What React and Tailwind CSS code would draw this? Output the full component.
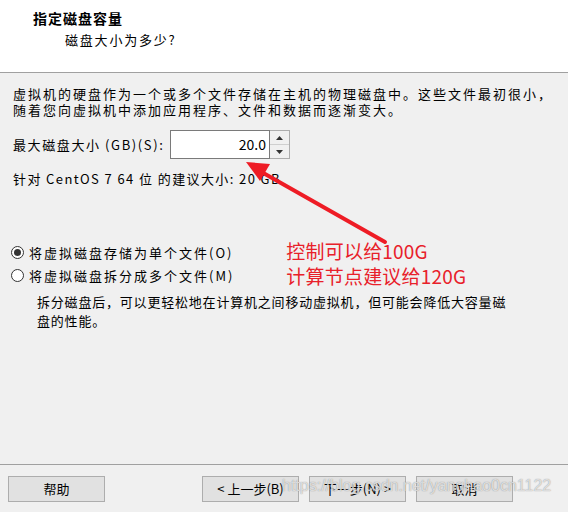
import React from "react";

const font = { fontFamily: '"Noto Sans CJK SC", "Noto Sans", sans-serif' };

function Radio({ checked, label }) {
  return (
    <label className="flex items-center h-[23px] text-[13px] tracking-[2px] text-black">
      <span className="w-[13px] h-[13px] rounded-full border border-[#333] bg-white flex items-center justify-center mr-[5px]">
        {checked && <span className="w-[7px] h-[7px] rounded-full bg-[#333]" />}
      </span>
      {label}
    </label>
  );
}

function Button({ children, className = "" }) {
  return (
    <button
      className={
        "h-[26px] w-[97px] border border-[#adadad] bg-[#e1e1e1] text-[13px] text-black flex items-center justify-center " +
        className
      }
    >
      {children}
    </button>
  );
}

export default function App() {
  return (
    <div className="relative w-[568px] h-[512px] bg-[#f0f0f0] flex flex-col overflow-hidden" style={font}>
      {/* header */}
      <div className="h-[73px] shrink-0 bg-white border-b border-[#a0a0a0] pt-[8px]">
        <div className="pl-[33px] text-[14px] font-bold tracking-[1px] leading-[20px] text-black">指定磁盘容量</div>
        <div className="pl-[65px] mt-[3px] text-[13px] tracking-[1.8px] leading-[18px] text-black">磁盘大小为多少?</div>
      </div>

      {/* body */}
      <div className="flex-1 px-[13px] pt-[13px] text-[13px] text-black">
        <p className="leading-[16px] tracking-[2px]">
          虚拟机的硬盘作为一个或多个文件存储在主机的物理磁盘中。这些文件最初很小，
          <br />
          随着您向虚拟机中添加应用程序、文件和数据而逐渐变大。
        </p>

        <div className="flex items-center mt-[12px] h-[29px]">
          <span className="tracking-[1.6px] w-[157px]">最大磁盘大小 (GB)(S):</span>
          <div className="flex h-[29px]">
            <div className="w-[100px] h-full border border-[#7a7a7a] bg-white flex items-center justify-end pr-[3px] text-[14px]">
              20.0
            </div>
            <div className="w-[20px] h-full flex flex-col border border-l-0 border-[#adadad]">
              <div className="flex-1 bg-[#f0f0f0] border-b border-[#cfcfcf] flex items-center justify-center">
                <svg width="7" height="4" viewBox="0 0 7 4"><path d="M3.5 0 L7 4 L0 4 Z" fill="#333" /></svg>
              </div>
              <div className="flex-1 bg-[#f0f0f0] flex items-center justify-center">
                <svg width="7" height="4" viewBox="0 0 7 4"><path d="M0 0 L7 0 L3.5 4 Z" fill="#333" /></svg>
              </div>
            </div>
          </div>
        </div>

        <p className="mt-[11px] leading-[18px] tracking-[1.4px]">针对 CentOS 7 64 位 的建议大小: 20 GB</p>

        <div className="mt-[53px] flex items-start">
          <div className="flex flex-col -ml-[2px]">
            <Radio checked label="将虚拟磁盘存储为单个文件(O)" />
            <Radio label="将虚拟磁盘拆分成多个文件(M)" />
          </div>
          <div className="ml-[52px] -mt-[3px] text-[19px] leading-[25px] text-[#e8202a] tracking-[0.2px]">
            <div>控制可以给100G</div>
            <div>计算节点建议给120G</div>
          </div>
        </div>

        <p className="ml-[24px] mt-[4px] leading-[19px] tracking-[0.8px] w-[480px]">
          拆分磁盘后，可以更轻松地在计算机之间移动虚拟机，但可能会降低大容量磁盘的性能。
        </p>
      </div>

      {/* footer */}
      <div className="h-[48px] shrink-0 border-t border-[#a0a0a0] flex items-start pt-[11px] pl-[8px] pr-[55px]">
        <Button>帮助</Button>
        <div className="flex-1" />
        <Button>&lt; 上一步(B)</Button>
        <Button className="ml-[10px]">下一步(N) &gt;</Button>
        <Button className="ml-[10px]">取消</Button>
      </div>

      {/* annotation arrow */}
      <svg className="absolute left-0 top-0 pointer-events-none" width="568" height="512">
        <line x1="385" y1="242" x2="258" y2="170" stroke="#ee1c25" strokeWidth="4" strokeLinecap="round" />
        <path d="M246 162 L270 164 L260 181 Z" fill="#ee1c25" />
      </svg>

      {/* watermark */}
      <div
        className="absolute left-[282px] top-[476px] text-[16px] leading-[20px] text-white/70 pointer-events-none"
        style={{ fontFamily: '"Liberation Sans", Arial, sans-serif', textShadow: "0 0 1px rgba(100,100,100,0.8)" }}
      >
        https://blog.csdn.net/yanghao0cn1122
      </div>
    </div>
  );
}
